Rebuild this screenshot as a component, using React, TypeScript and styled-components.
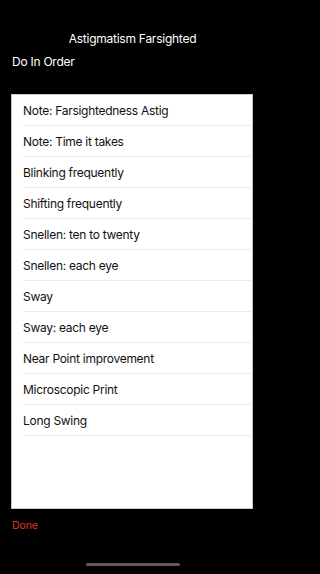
import React from "react";
import styled, { createGlobalStyle } from "styled-components";

const Global = createGlobalStyle`
  html, body { margin: 0; padding: 0; background: #000; }
  body { font-family: Inter, "Liberation Sans", sans-serif; -webkit-font-smoothing: antialiased; }
`;

const Screen = styled.div`
  position: relative;
  width: 265px;
  height: 574px;
  background: #000;
  display: flex;
  flex-direction: column;
  overflow: hidden;
`;

const Title = styled.div`
  margin-top: 31px;
  height: 16px;
  line-height: 16px;
  text-align: center;
  color: #fff;
  font-size: 12px;
  letter-spacing: -0.25px;
`;

const Subtitle = styled.div`
  margin-top: 7px;
  padding-left: 12px;
  height: 16px;
  line-height: 16px;
  color: #fff;
  font-size: 12px;
  letter-spacing: -0.25px;
`;

const Panel = styled.div`
  margin: 24px 12px 0 11px;
  height: 415px;
  background: #fff;
  border: 1px solid #c8c8c8;
  box-sizing: border-box;
  display: flex;
  flex-direction: column;
`;

const Row = styled.div`
  height: 31px;
  padding-left: 11px;
  display: flex;
  align-items: stretch;
  flex-shrink: 0;
`;

const RowInner = styled.div`
  flex: 1;
  display: flex;
  align-items: center;
  border-bottom: 1px solid #ececec;
  color: #111;
  font-size: 12px;
  letter-spacing: -0.28px;
  white-space: nowrap;
  overflow: hidden;
`;

const Done = styled.div`
  margin-top: 10px;
  padding-left: 12px;
  height: 14px;
  line-height: 14px;
  color: #e2331d;
  font-size: 10.6px;
  letter-spacing: -0.15px;
`;

const HomeIndicator = styled.div`
  position: absolute;
  left: 86px;
  bottom: 8px;
  width: 94px;
  height: 3px;
  border-radius: 2px;
  background: #5c5c5c;
`;

const items = [
  "Note: Farsightedness Astig",
  "Note: Time it takes",
  "Blinking frequently",
  "Shifting frequently",
  "Snellen: ten to twenty",
  "Snellen: each eye",
  "Sway",
  "Sway: each eye",
  "Near Point improvement",
  "Microscopic Print",
  "Long Swing",
];

export default function App() {
  return (
    <>
      <Global />
      <Screen>
        <Title>Astigmatism Farsighted</Title>
        <Subtitle>Do In Order</Subtitle>
        <Panel>
          {items.map((t) => (
            <Row key={t}>
              <RowInner>{t}</RowInner>
            </Row>
          ))}
        </Panel>
        <Done>Done</Done>
        <HomeIndicator />
      </Screen>
    </>
  );
}
